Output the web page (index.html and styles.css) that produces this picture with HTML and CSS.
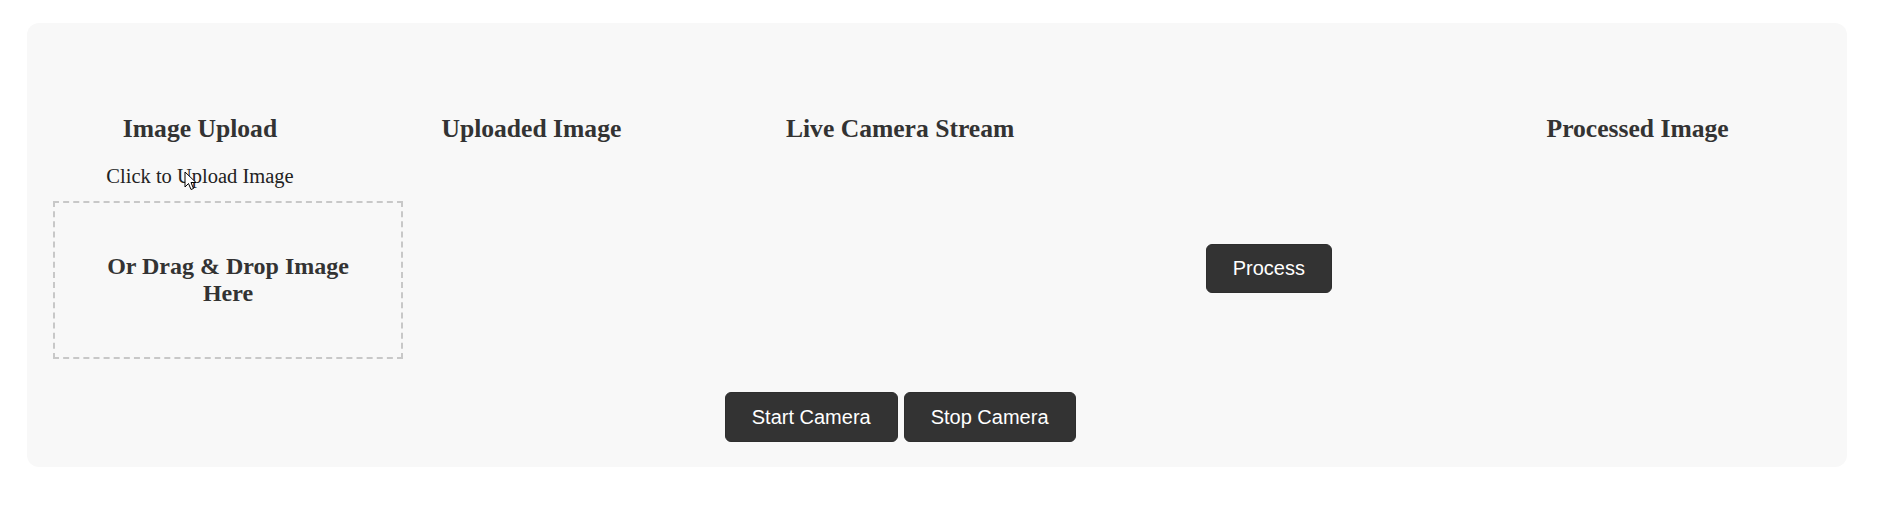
FILE: index.html
```html
<!DOCTYPE html>
<html lang="en">
<head>
<meta charset="utf-8">
<title>Image Processing</title>
<link rel="stylesheet" href="styles.css">
</head>
<body>
<div class="container">
  <div class="row">
    <section class="col col-upload">
      <h2 class="title">Image Upload</h2>
      <label class="upload-label">Click to Upload Image</label>
      <div class="drop-zone">
        <h3 class="drop-text">Or Drag &amp; Drop Image Here</h3>
      </div>
      <svg class="cursor" width="14" height="21" viewBox="0 0 14 21" aria-hidden="true">
        <path d="M1 1 L1 16 L4.5 12.5 L7 18.5 L9.5 17.5 L7 11.5 L12 11.5 Z" fill="#fff" stroke="#000" stroke-width="1" stroke-linejoin="round"/>
      </svg>
    </section>
    <section class="col">
      <h2 class="title">Uploaded Image</h2>
    </section>
    <section class="col col-camera">
      <h2 class="title">Live Camera Stream</h2>
      <div class="video-space"></div>
      <div class="btn-row">
        <button class="btn btn-cam">Start Camera</button>
        <button class="btn btn-cam">Stop Camera</button>
      </div>
    </section>
    <section class="col col-process">
      <button class="btn">Process</button>
    </section>
    <section class="col">
      <h2 class="title">Processed Image</h2>
    </section>
  </div>
</div>
</body>
</html>
```
FILE: styles.css
```css
html, body {
  margin: 0;
  padding: 0;
  background: #ffffff;
}

body {
  font-family: "Liberation Serif", "Times New Roman", serif;
  color: #333;
}

.container {
  margin: 23px 36px 0 27px;
  background: #f8f8f8;
  border-radius: 12px;
  padding: 72px 25px 25px 26px;
  box-sizing: border-box;
  height: 444px;
}

.row {
  display: grid;
  grid-template-columns: 294px repeat(4, 1fr);
  align-items: start;
}

.col {
  display: flex;
  flex-direction: column;
  align-items: center;
  text-align: center;
}

.title {
  font-size: 25.6px;
  font-weight: bold;
  margin: 19px 0 0;
  white-space: nowrap;
  color: #333;
}

.col-upload {
  position: relative;
  align-items: flex-start;
}

.col-upload .title {
  align-self: center;
}

.upload-label {
  align-self: center;
  font-size: 20.5px;
  color: #222;
  margin-top: 21px;
  white-space: nowrap;
}

.drop-zone {
  margin-top: 13px;
  width: 350px;
  height: 158px;
  box-sizing: border-box;
  border: 2px dashed #c8c8c8;
  padding: 0 25px;
  display: flex;
  align-items: center;
  justify-content: center;
  flex-shrink: 0;
}

.drop-text {
  margin: 0;
  font-size: 24px;
  font-weight: bold;
  text-align: center;
  color: #333;
}

.cursor {
  position: absolute;
  left: 131px;
  top: 76px;
}

.video-space {
  height: 248px;
}

.btn-row {
  display: flex;
  gap: 6px;
  white-space: nowrap;
}

.btn {
  font-family: "Liberation Sans", Arial, sans-serif;
  font-size: 20px;
  line-height: 23px;
  color: #fff;
  background: #333;
  border: 1px solid #2e2e2e;
  border-radius: 6px;
  padding: 12px 26px;
  cursor: pointer;
}

.btn-cam {
  padding: 12.5px 26px;
}

.col-process {
  align-self: center;
}
```
